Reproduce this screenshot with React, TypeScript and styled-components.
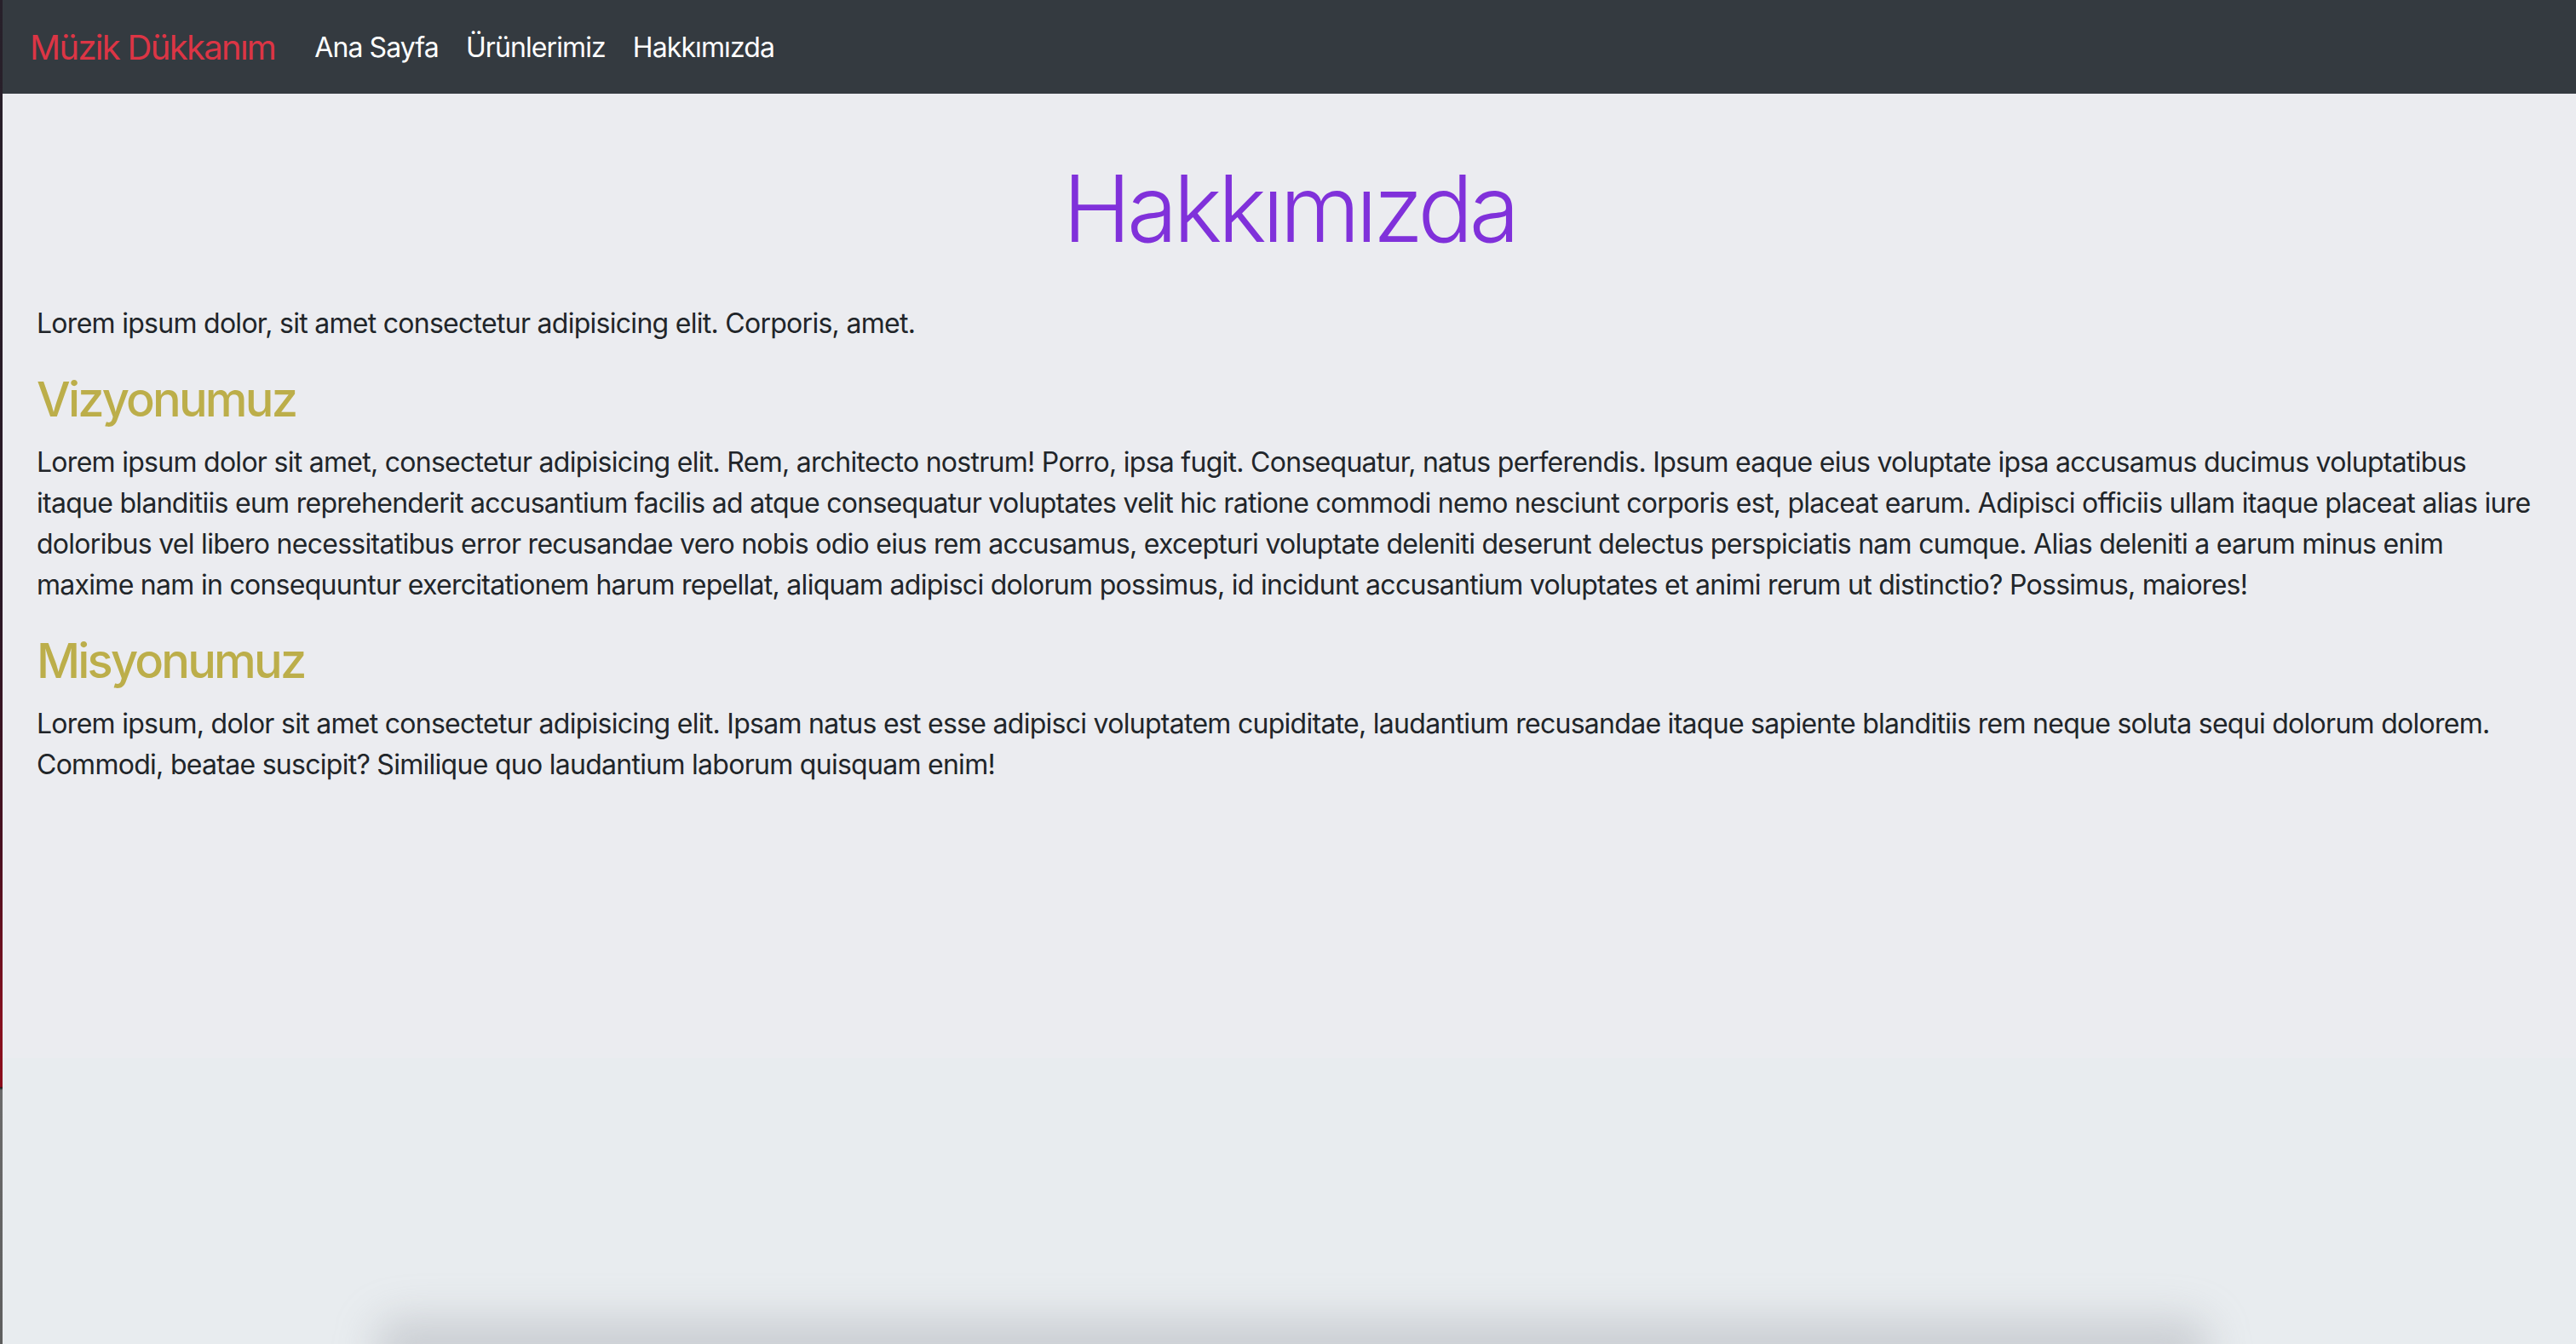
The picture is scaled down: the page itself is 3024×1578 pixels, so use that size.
import React from "react";
import styled, { createGlobalStyle } from "styled-components";

const GlobalStyle = createGlobalStyle`
  html, body {
    margin: 0;
    padding: 0;
  }
  body {
    font-family: Inter, "Noto Sans", "Liberation Sans", sans-serif;
    color: #212529;
    background: #e8ecef;
  }
  * { box-sizing: border-box; }
`;

const Frame = styled.div`
  display: flex;
  min-height: 100vh;
`;

const EdgeStrip = styled.div`
  flex: 0 0 3px;
  background: linear-gradient(
    to bottom,
    #27202a 0,
    #2a1826 700px,
    #4a1020 1000px,
    #86101f 1200px,
    #8b0d1c 1276px,
    #1a1a1a 1277px,
    #6b6b6b 1280px,
    #5e5e5e 100%
  );
`;

const Page = styled.div`
  flex: 1;
  display: flex;
  flex-direction: column;
  background: linear-gradient(to bottom, #ebecf0 0, #ebecf0 1242px, #e8ecef 1242px);
`;

const Navbar = styled.nav`
  height: 110px;
  background: #343a40;
  display: flex;
  align-items: center;
  padding: 0 32px;
`;

const Brand = styled.a`
  font-size: 40px;
  color: #dc3545;
  margin-right: 30px;
  text-decoration: none;
  letter-spacing: -1.7px;
`;

const NavList = styled.ul`
  display: flex;
  list-style: none;
  margin: 0;
  padding: 0;
`;

const NavLink = styled.a`
  display: block;
  padding: 16px 16px;
  font-size: 32px;
  color: #ffffff;
  text-decoration: none;
  letter-spacing: -0.9px;
`;

const Main = styled.main`
  padding: 0 40px;
`;

const Title = styled.h1`
  margin: 70px 0 46px;
  text-align: center;
  font-size: 108px;
  font-weight: 300;
  line-height: 1.2;
  color: #8031da;
  letter-spacing: -4.8px;
`;

const Text = styled.p`
  margin: 0 0 32px;
  font-size: 32px;
  line-height: 1.5;
  letter-spacing: -0.72px;
`;

const SectionTitle = styled.h3`
  margin: 0 0 16px;
  font-size: 56px;
  font-weight: 500;
  line-height: 1.2;
  color: #bcae4a;
  letter-spacing: -2.8px;
`;

const DockShadow = styled.div`
  position: fixed;
  left: 440px;
  right: 430px;
  bottom: -40px;
  height: 70px;
  border-radius: 30px;
  background: rgba(150, 152, 160, 0.35);
  filter: blur(24px);
  pointer-events: none;
`;

export default function App() {
  return (
    <>
      <GlobalStyle />
      <Frame>
        <EdgeStrip />
        <Page>
          <Navbar>
            <Brand href="#">Müzik Dükkanım</Brand>
            <NavList>
              <li><NavLink href="#">Ana Sayfa</NavLink></li>
              <li><NavLink href="#">Ürünlerimiz</NavLink></li>
              <li><NavLink href="#">Hakkımızda</NavLink></li>
            </NavList>
          </Navbar>
          <Main>
            <Title>Hakkımızda</Title>
            <Text>Lorem ipsum dolor, sit amet consectetur adipisicing elit. Corporis, amet.</Text>
            <SectionTitle>Vizyonumuz</SectionTitle>
            <Text>
              Lorem ipsum dolor sit amet, consectetur adipisicing elit. Rem, architecto nostrum! Porro, ipsa fugit. Consequatur, natus perferendis. Ipsum eaque eius voluptate ipsa accusamus ducimus voluptatibus itaque blanditiis eum reprehenderit accusantium facilis ad atque consequatur voluptates velit hic ratione commodi nemo nesciunt corporis est, placeat earum. Adipisci officiis ullam itaque placeat alias iure doloribus vel libero necessitatibus error recusandae vero nobis odio eius rem accusamus, excepturi voluptate deleniti deserunt delectus perspiciatis nam cumque. Alias deleniti a earum minus enim maxime nam in consequuntur exercitationem harum repellat, aliquam adipisci dolorum possimus, id incidunt accusantium voluptates et animi rerum ut distinctio? Possimus, maiores!
            </Text>
            <SectionTitle>Misyonumuz</SectionTitle>
            <Text>
              Lorem ipsum, dolor sit amet consectetur adipisicing elit. Ipsam natus est esse adipisci voluptatem cupiditate, laudantium recusandae itaque sapiente blanditiis rem neque soluta sequi dolorum dolorem. Commodi, beatae suscipit? Similique quo laudantium laborum quisquam enim!
            </Text>
          </Main>
        </Page>
      </Frame>
      <DockShadow />
    </>
  );
}
